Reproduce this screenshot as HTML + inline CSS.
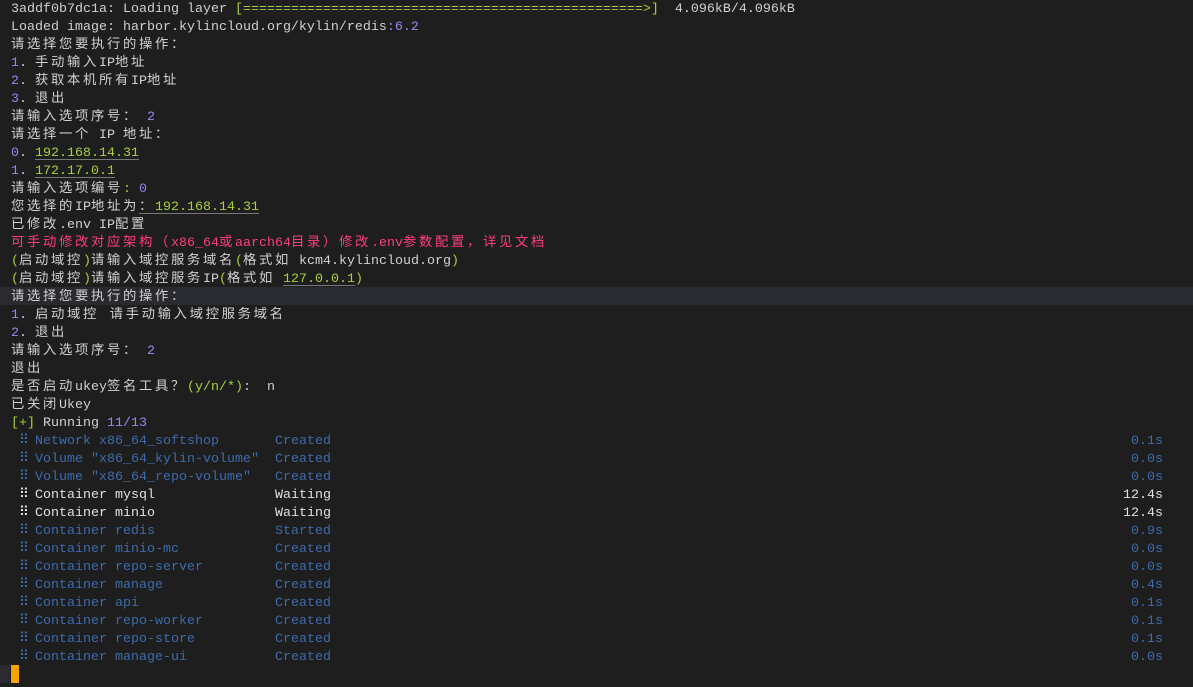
<!DOCTYPE html>
<html><head><meta charset="utf-8"><style>
body{margin:0;width:1193px;height:687px;background:#1e1e1e;overflow:hidden;font-family:"Liberation Mono","Noto Sans CJK SC",monospace;font-size:13.33px;color:#d0d0d0}
.l{position:absolute;left:11px;height:18px;line-height:18px;white-space:pre;margin-top:2px}
.c{letter-spacing:2.67px}
.p{color:#9b86f0}.g{color:#a6d13a}.r{color:#ff3d7c}.b{color:#3d6bab}.w{color:#e0e0e0}
.u{text-decoration:underline;text-decoration-color:#777;text-underline-offset:3px}
.t{position:absolute;right:0}
.s{position:absolute;left:264px}
.d{display:inline-block;width:8px;overflow:hidden;vertical-align:top}
</style></head><body>
<div style="position:absolute;left:0;top:287px;width:1193px;height:18px;background:#2a2b31"></div>
<div style="position:absolute;left:0;top:665px;width:10px;height:18px;background:#2a2b31"></div>
<div style="position:absolute;left:11px;top:665px;width:8px;height:18px;background:#f7a300"></div>
<div class="l" style="top:-1px">3addf0b7dc1a: Loading layer <span class="g">[==================================================&gt;]</span>  4.096kB/4.096kB</div>
<div class="l" style="top:17px">Loaded image: harbor.kylincloud.org/kylin/redis<span class="p">:6.2</span></div>
<div class="l" style="top:35px"><span class="c">请选择您要执行的操作：</span></div>
<div class="l" style="top:53px"><span class="p">1</span>. <span class="c">手动输入</span>IP<span class="c">地址</span></div>
<div class="l" style="top:71px"><span class="p">2</span>. <span class="c">获取本机所有</span>IP<span class="c">地址</span></div>
<div class="l" style="top:89px"><span class="p">3</span>. <span class="c">退出</span></div>
<div class="l" style="top:107px"><span class="c">请输入选项序号：</span> <span class="p">2</span></div>
<div class="l" style="top:125px"><span class="c">请选择一个</span> IP <span class="c">地址：</span></div>
<div class="l" style="top:143px"><span class="p">0</span>. <span class="g u">192.168.14.31</span></div>
<div class="l" style="top:161px"><span class="p">1</span>. <span class="g u">172.17.0.1</span></div>
<div class="l" style="top:179px"><span class="c">请输入选项编号</span><span class="g">:</span> <span class="p">0</span></div>
<div class="l" style="top:197px"><span class="c">您选择的</span>IP<span class="c">地址为</span><span class="u"><span class="c">：</span><span class="g">192.168.14.31</span></span></div>
<div class="l" style="top:215px"><span class="c">已修改</span>.env IP<span class="c">配置</span></div>
<div class="l r" style="top:233px"><span class="c">可手动修改对应架构（</span>x86_64<span class="c">或</span>aarch64<span class="c">目录）修改</span>.env<span class="c">参数配置，详见文档</span></div>
<div class="l" style="top:251px"><span class="g">(</span><span class="c">启动域控</span><span class="g">)</span><span class="c">请输入域控服务域名</span><span class="g">(</span><span class="c">格式如</span> kcm4.kylincloud.org<span class="g">)</span></div>
<div class="l" style="top:269px"><span class="g">(</span><span class="c">启动域控</span><span class="g">)</span><span class="c">请输入域控服务</span>IP<span class="g">(</span><span class="c">格式如</span> <span class="g u">127.0.0.1</span><span class="g">)</span></div>
<div class="l" style="top:287px"><span class="c">请选择您要执行的操作：</span></div>
<div class="l" style="top:305px"><span class="p">1</span>. <span class="c">启动域控 请手动输入域控服务域名</span></div>
<div class="l" style="top:323px"><span class="p">2</span>. <span class="c">退出</span></div>
<div class="l" style="top:341px"><span class="c">请输入选项序号：</span> <span class="p">2</span></div>
<div class="l" style="top:359px"><span class="c">退出</span></div>
<div class="l" style="top:377px"><span class="c">是否启动</span>ukey<span class="c">签名工具？</span><span class="g">(y/n/*)</span>:  n</div>
<div class="l" style="top:395px"><span class="c">已关闭</span>Ukey</div>
<div class="l" style="top:413px"><span class="g">[+]</span> Running <span class="p">11/13</span></div>
<div class="l b" style="top:431px;width:1152px"> <span class="d">⠿</span> Network x86_64_softshop<span class="s">Created</span><span class="t">0.1s</span></div>
<div class="l b" style="top:449px;width:1152px"> <span class="d">⠿</span> Volume "x86_64_kylin-volume"<span class="s">Created</span><span class="t">0.0s</span></div>
<div class="l b" style="top:467px;width:1152px"> <span class="d">⠿</span> Volume "x86_64_repo-volume"<span class="s">Created</span><span class="t">0.0s</span></div>
<div class="l w" style="top:485px;width:1152px"> <span class="d">⠿</span> Container mysql<span class="s">Waiting</span><span class="t">12.4s</span></div>
<div class="l w" style="top:503px;width:1152px"> <span class="d">⠿</span> Container minio<span class="s">Waiting</span><span class="t">12.4s</span></div>
<div class="l b" style="top:521px;width:1152px"> <span class="d">⠿</span> Container redis<span class="s">Started</span><span class="t">0.9s</span></div>
<div class="l b" style="top:539px;width:1152px"> <span class="d">⠿</span> Container minio-mc<span class="s">Created</span><span class="t">0.0s</span></div>
<div class="l b" style="top:557px;width:1152px"> <span class="d">⠿</span> Container repo-server<span class="s">Created</span><span class="t">0.0s</span></div>
<div class="l b" style="top:575px;width:1152px"> <span class="d">⠿</span> Container manage<span class="s">Created</span><span class="t">0.4s</span></div>
<div class="l b" style="top:593px;width:1152px"> <span class="d">⠿</span> Container api<span class="s">Created</span><span class="t">0.1s</span></div>
<div class="l b" style="top:611px;width:1152px"> <span class="d">⠿</span> Container repo-worker<span class="s">Created</span><span class="t">0.1s</span></div>
<div class="l b" style="top:629px;width:1152px"> <span class="d">⠿</span> Container repo-store<span class="s">Created</span><span class="t">0.1s</span></div>
<div class="l b" style="top:647px;width:1152px"> <span class="d">⠿</span> Container manage-ui<span class="s">Created</span><span class="t">0.0s</span></div>
</body></html>
